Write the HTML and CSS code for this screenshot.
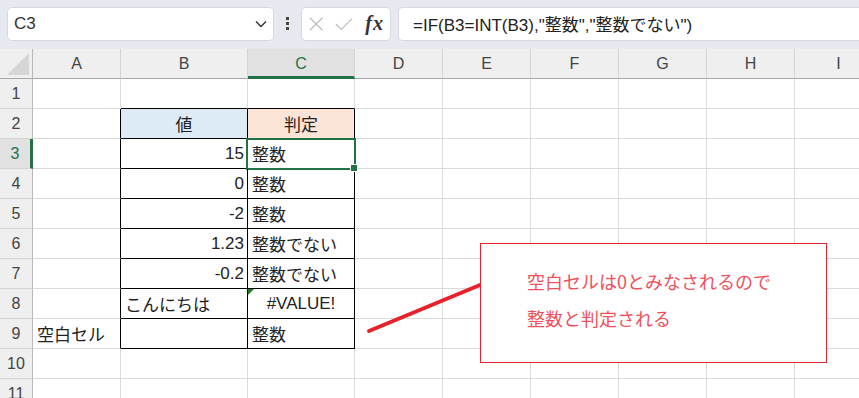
FILE: index.html
```html
<!DOCTYPE html>
<html lang="ja">

<head>
     <meta charset="UTF-8">
     <meta name="viewport" content="width=device-width, initial-scale=1.0">
     <title>IF INT</title>
     <link rel="stylesheet" href="styles.css">
</head>

<body>
     <div class="topbar">
          <div class="namebox">
               <span>C3</span>
               <svg class="chevron" width="12" height="8" viewBox="0 0 12 8"><path d="M1 1.5 L6 6.5 L11 1.5" fill="none" stroke="#333" stroke-width="1.4"/></svg>
          </div>
          <div class="dots"><i></i><i></i><i></i></div>
          <div class="fxbox">
               <svg width="16" height="16" viewBox="0 0 16 16"><path d="M1 1 L15 15 M15 1 L1 15" stroke="#bdbdbd" stroke-width="1.4"/></svg>
               <svg width="20" height="16" viewBox="0 0 20 16"><path d="M1 8 L7 14 L19 2" fill="none" stroke="#bdbdbd" stroke-width="1.4"/></svg>
               <span class="fx">fx</span>
          </div>
          <div class="formula">=IF(B3=INT(B3),"整数","整数でない")</div>
     </div>

     <div class="sheet" id="sheet"></div>

     <svg class="arrow" width="120" height="56" viewBox="0 0 120 56">
          <path d="M3 51 L114 5" stroke="#e8222c" stroke-width="4" stroke-linecap="round"/>
     </svg>
     <div class="note">
          <p>空白セルは0とみなされるので</p>
          <p>整数と判定される</p>
     </div>

     <script>
          let cols = ['A', 'B', 'C', 'D', 'E', 'F', 'G', 'H', 'I', 'J']
          let data = {
               2: { B: ['値', 'center head-b'], C: ['判定', 'center head-c'] },
               3: { B: ['15', 'right'], C: ['整数', 'sel'] },
               4: { B: ['0', 'right'], C: ['整数', ''] },
               5: { B: ['-2', 'right'], C: ['整数', ''] },
               6: { B: ['1.23', 'right'], C: ['整数でない', ''] },
               7: { B: ['-0.2', 'right'], C: ['整数でない', ''] },
               8: { B: ['こんにちは', ''], C: ['#VALUE!', 'center err'] },
               9: { A: ['空白セル', ''], B: ['', ''], C: ['整数', ''] }
          }

          let html = '<div class="corner"><span></span></div>'
          for (let i = 0; i < cols.length; i++) {
               let cls = cols[i] == 'C' ? 'colhead active' : 'colhead'
               html = html + `<div class="${cls}">${cols[i]}</div>`
          }

          for (let r = 1; r <= 11; r++) {
               let rcls = r == 3 ? 'rowhead active' : 'rowhead'
               html = html + `<div class="${rcls}">${r}</div>`
               for (let i = 0; i < cols.length; i++) {
                    let c = cols[i]
                    let cell = data[r] && data[r][c]
                    let cls = 'cell'
                    let text = ''
                    if (cell) {
                         text = cell[0]
                         cls = cls + ' ' + cell[1]
                    }
                    if (r >= 2 && r <= 9 && (c == 'B' || c == 'C')) cls = cls + ' boxed'
                    if (r >= 2 && r <= 9 && c == 'A') cls = cls + ' edge-r'
                    if (r == 1 && (c == 'B' || c == 'C')) cls = cls + ' edge-b'
                    html = html + `<div class="${cls}">${text}</div>`
               }
          }
          document.getElementById('sheet').innerHTML = html
     </script>
</body>

</html>
```

FILE: styles.css
```css
* {
     box-sizing: border-box;
}

body {
     margin: 0;
     width: 859px;
     height: 398px;
     overflow: hidden;
     position: relative;
     background: #fff;
     font-family: "Liberation Sans", "Noto Sans CJK JP", sans-serif;
     color: #222;
}

/* formula bar */

.topbar {
     height: 49px;
     background: #e6e9ef;
     display: flex;
     align-items: center;
     padding: 0 0 2px 7px;
}

.namebox {
     width: 267px;
     height: 34px;
     background: #fff;
     border: 1px solid #d7d9de;
     border-radius: 5px;
     display: flex;
     align-items: center;
     justify-content: space-between;
     padding: 0 6px 0 6px;
     font-size: 17px;
     color: #333;
}

.dots {
     width: 27px;
     display: flex;
     flex-direction: column;
     align-items: center;
     gap: 2px;
}

.dots i {
     width: 3px;
     height: 3px;
     background: #444;
}

.fxbox {
     width: 90px;
     height: 34px;
     background: #fff;
     border: 1px solid #d7d9de;
     border-radius: 5px;
     display: flex;
     align-items: center;
     padding: 0 6px 0 7px;
     gap: 12px;
}

.fx {
     font-family: "Liberation Serif", serif;
     font-style: italic;
     font-weight: bold;
     font-size: 20px;
     color: #333;
     letter-spacing: 1px;
}

.formula {
     flex: 1;
     margin-left: 7px;
     height: 34px;
     background: #fff;
     border: 1px solid #d7d9de;
     border-right: none;
     border-radius: 5px 0 0 5px;
     display: flex;
     align-items: center;
     padding-left: 14px;
     font-size: 17px;
     color: #222;
}

/* sheet grid */

.sheet {
     display: grid;
     grid-template-columns: 33px 88px 127px 107px 88px 88px 88px 88px 88px 88px 88px;
     grid-auto-rows: 30px;
     font-size: 17px;
}

.corner {
     background: #efefef;
     border-right: 1px solid #b8b8b8;
     border-bottom: 1px solid #a8a8a8;
     position: relative;
}

.corner span {
     position: absolute;
     right: 3px;
     bottom: 3px;
     width: 0;
     height: 0;
     border-left: 22px solid transparent;
     border-bottom: 22px solid #d6d6d6;
}

.colhead {
     background: #efefef;
     border-right: 1px solid #d4d4d4;
     border-bottom: 1px solid #a8a8a8;
     display: flex;
     align-items: center;
     justify-content: center;
     color: #444;
     font-size: 16px;
}

.colhead.active {
     background: #e1e1e1;
     border-bottom: 3px solid #217346;
     padding-top: 2px;
     color: #217346;
}

.rowhead {
     background: #efefef;
     border-right: 1px solid #b8b8b8;
     border-bottom: 1px solid #d4d4d4;
     display: flex;
     align-items: center;
     justify-content: center;
     color: #444;
     font-size: 16px;
}

.rowhead.active {
     background: #e1e1e1;
     border-right: 3px solid #217346;
     color: #217346;
}

.cell {
     border-right: 1px solid #dadada;
     border-bottom: 1px solid #dadada;
     display: flex;
     align-items: center;
     padding: 0 4px;
     white-space: nowrap;
     overflow: visible;
     position: relative;
}

.cell.right {
     justify-content: flex-end;
     padding-right: 3px;
}

.cell.center {
     justify-content: center;
}

.cell.boxed {
     border-right-color: #000;
     border-bottom-color: #000;
}

.cell.edge-r {
     border-right-color: #000;
}

.cell.edge-b {
     border-bottom-color: #000;
}

.head-b {
     background: #ddebf7;
}

.head-c {
     background: #fce4d6;
}

.cell.sel::after {
     content: "";
     position: absolute;
     top: -1px;
     left: -2px;
     right: -2px;
     bottom: -2px;
     border: 2px solid #217346;
}

.cell.sel::before {
     content: "";
     position: absolute;
     right: -4px;
     bottom: -4px;
     width: 6px;
     height: 6px;
     background: #217346;
     border: 1px solid #fff;
     z-index: 2;
}

.cell.err::before {
     content: "";
     position: absolute;
     top: 0;
     left: 0;
     width: 0;
     height: 0;
     border-top: 6px solid #1e7b1e;
     border-right: 6px solid transparent;
}

/* annotation */

.arrow {
     position: absolute;
     left: 366px;
     top: 280px;
}

.note {
     position: absolute;
     left: 480px;
     top: 243px;
     width: 347px;
     height: 120px;
     background: #fff;
     border: 1px solid #e8222c;
     padding: 19px 0 0 46px;
     color: #f0505b;
     font-family: "Noto Sans CJK JP", sans-serif;
     font-size: 18px;
}

.note p {
     margin: 0;
     line-height: 37px;
}
```
